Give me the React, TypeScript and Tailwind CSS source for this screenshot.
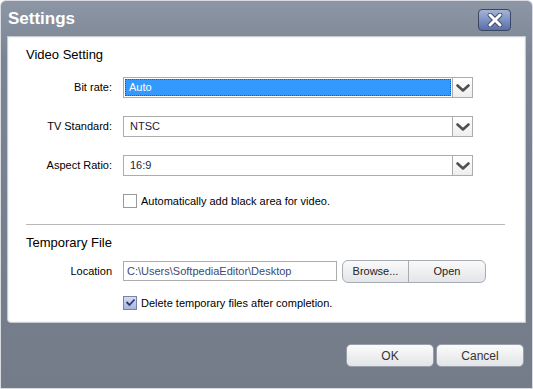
import React from "react";

const font = { fontFamily: '"Liberation Sans", Arial, sans-serif' };

function Chevron() {
  return (
    <svg width="14" height="8" viewBox="0 0 14 8">
      <path d="M1.5 1.5 L7 6.5 L12.5 1.5" fill="none" stroke="#505050" strokeWidth="2.6" strokeLinecap="round" strokeLinejoin="round" />
    </svg>
  );
}

function Select({ value, selected }: { value: string; selected?: boolean }) {
  return (
    <div className="flex h-[21px] w-[350px] border border-[#acacac] bg-white">
      <div className="flex flex-1 items-center p-[1px]">
        {selected ? (
          <div className="flex h-full w-full items-center border border-dotted border-[#7a4a10] bg-[#3399ff] pl-[3px] text-white">
            {value}
          </div>
        ) : (
          <div className="pl-[5px] text-[#1c1c3c]">{value}</div>
        )}
      </div>
      <div className="flex w-[20px] items-center justify-center border-l border-[#acacac] bg-gradient-to-b from-white to-[#eeeeee]">
        <Chevron />
      </div>
    </div>
  );
}

function Row({ label, children }: { label: string; children: React.ReactNode }) {
  return (
    <div className="flex items-center">
      <div className="w-[86px] text-right">{label}</div>
      <div className="ml-[11px]">{children}</div>
    </div>
  );
}

export default function App() {
  return (
    <div
      className="relative h-[389px] w-[533px] overflow-hidden rounded-t-[6px] border border-[#d8dce2] bg-gradient-to-b from-[#8d96a5] via-[#7b8493] via-[15%] to-[#747b89] text-[11px] text-black"
      style={font}
    >
      <div className="flex h-[35px] items-center justify-between pl-[7px] pr-[21px]">
        <div className="mt-[1px] text-[17px] font-bold text-white">Settings</div>
        <div className="mt-[3px] flex h-[22px] w-[33px] items-center justify-center rounded-[4px] border border-[#3a4668] bg-gradient-to-b from-[#a5b3d6] via-[#7e92c4] via-[50%] to-[#5a6ea6]">
          <svg width="16" height="14" viewBox="0 0 16 14">
            <path d="M3 2 L13 12 M13 2 L3 12" stroke="#3a4668" strokeWidth="4.6" strokeLinecap="round" />
            <path d="M3 2 L13 12 M13 2 L3 12" stroke="white" strokeWidth="3" strokeLinecap="round" />
          </svg>
        </div>
      </div>

      <div className="mx-[6px] h-[287px] rounded-bl-[4px] border border-[#c8ccd2] bg-white pl-[18px] shadow-[inset_0_0_0_1px_#f4f5f7]">
        <div className="mt-[10px] h-[16px] text-[13px] leading-[16px]">Video Setting</div>

        <div className="mt-[14px]">
          <Row label="Bit rate:">
            <Select value="Auto" selected />
          </Row>
        </div>
        <div className="mt-[18px]">
          <Row label="TV Standard:">
            <Select value="NTSC" />
          </Row>
        </div>
        <div className="mt-[18px]">
          <Row label="Aspect Ratio:">
            <Select value="16:9" />
          </Row>
        </div>

        <div className="mt-[17px] ml-[97px] flex items-center">
          <div className="h-[14px] w-[14px] border border-[#9a9a9a] bg-white" />
          <div className="ml-[4px] text-black">Automatically add black area for video.</div>
        </div>

        <div className="mt-[14px] mr-[20px] h-px bg-[#b8b8b8]" />

        <div className="mt-[10px] h-[16px] text-[13px] leading-[16px]">Temporary File</div>

        <div className="mt-[9px] flex h-[23px] items-center">
          <div className="w-[86px] text-right">Location</div>
          <div className="ml-[11px] flex h-[20px] w-[214px] items-center border border-[#acacac] pl-[3px] text-[#3b4a72]">
            C:\Users\SoftpediaEditor\Desktop
          </div>
          <div className="ml-[5px] flex h-[23px] overflow-hidden rounded-[6px] border border-[#a8adb5] bg-gradient-to-b from-[#fafafa] to-[#e3e5e8] text-[#222]">
            <div className="flex w-[66px] items-center justify-center border-r border-[#a8adb5]">Browse...</div>
            <div className="flex w-[76px] items-center justify-center">Open</div>
          </div>
        </div>

        <div className="mt-[12px] ml-[97px] flex items-center">
          <div className="flex h-[14px] w-[14px] items-center justify-center border border-[#7a80a8] bg-gradient-to-b from-[#d6dcf2] to-[#aab4e0]">
            <svg width="11" height="9" viewBox="0 0 11 9">
              <path d="M1.5 4 L4.5 7 L9.5 1.5" fill="none" stroke="#2c3a70" strokeWidth="1.8" />
            </svg>
          </div>
          <div className="ml-[4px] text-black">Delete temporary files after completion.</div>
        </div>
      </div>

      <div className="mt-[21px] flex justify-end gap-[2px] pr-[8px]">
        <div className="flex h-[23px] w-[88px] items-center justify-center rounded-[5px] border border-[#9aa0aa] bg-gradient-to-b from-[#fbfbfb] to-[#e2e4e7] text-[12px] text-[#333]">
          OK
        </div>
        <div className="flex h-[23px] w-[88px] items-center justify-center rounded-[5px] border border-[#9aa0aa] bg-gradient-to-b from-[#fbfbfb] to-[#e2e4e7] text-[12px] text-[#333]">
          Cancel
        </div>
      </div>
    </div>
  );
}
